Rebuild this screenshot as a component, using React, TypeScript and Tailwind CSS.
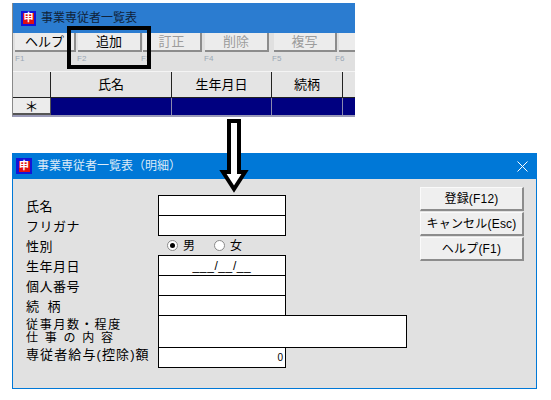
import type { ReactNode } from "react";

const jp = "font-['Liberation_Sans','Noto_Sans_CJK_JP',sans-serif]";

// ─── Shared bits ──────────────────────────────────────────────────────────────

function AppIcon({ small }: { small?: boolean }) {
  return (
    <span className={`flex items-center justify-center ${small ? "w-[15px] h-[15px]" : "w-[16px] h-[16px]"} bg-[#1414d8] shrink-0`}>
      <span className="flex items-center justify-center w-[11px] h-[11px] bg-[#e01010] text-white text-[10px] leading-none font-bold">
        申
      </span>
    </span>
  );
}

// ─── List window ──────────────────────────────────────────────────────────────

const toolButtons = [
  { label: "ヘルプ", width: "w-[61px]", ml: "ml-[2px]", disabled: false },
  { label: "追加", width: "w-[64px]", ml: "ml-[2px]", disabled: false },
  { label: "訂正", width: "w-[59px]", ml: "ml-[1px]", disabled: true },
  { label: "削除", width: "w-[64px]", ml: "ml-[3px]", disabled: true },
  { label: "複写", width: "w-[63px]", ml: "ml-[5px]", disabled: true },
  { label: "", width: "w-[20px]", ml: "ml-[2px]", disabled: true },
];

const keyLabels = [
  { label: "F1", width: "w-[62px]" },
  { label: "F2", width: "w-[64px]" },
  { label: "F3", width: "w-[63px]" },
  { label: "F4", width: "w-[68px]" },
  { label: "F5", width: "w-[63px]" },
  { label: "F6", width: "w-[20px]" },
];

const gridColumns = [
  { label: "", width: "w-[38px]" },
  { label: "氏名", width: "w-[121px]" },
  { label: "生年月日", width: "w-[100px]" },
  { label: "続柄", width: "w-[71px]" },
  { label: "", width: "w-[13px]" },
];

function ListWindow() {
  return (
    <div className="w-[343px] h-[114px] ml-[12px] border-l border-[#8a8a8a] border-b-2 border-b-[#9a9ab8] bg-[#e0e0e0] overflow-hidden">
      <div className="h-[30px] bg-[#2b7cd0] flex items-center gap-[5px] pl-[8px] text-[12px] text-[#10233a]">
        <AppIcon small />
        <span>事業専従者一覧表</span>
      </div>

      <div className="flex h-[19px]">
        {toolButtons.map((b, i) => (
          <div
            key={i}
            className={`${b.width} ${b.ml} shrink-0 bg-[#ececec] border-r-2 border-b-2 border-[#8c8c8c] flex items-center justify-center text-[13px] leading-none ${
              b.disabled ? "text-[#9c9c9c]" : "text-black"
            }`}
          >
            {b.label}
          </div>
        ))}
      </div>

      <div className="flex h-[19px] pl-[2px] text-[8px] leading-[14px] text-[#9aa7b5]">
        {keyLabels.map((k) => (
          <span key={k.label} className={`${k.width} shrink-0`}>
            {k.label}
          </span>
        ))}
      </div>

      <div className="flex h-[27px] border-t border-[#f4f4f4]">
        {gridColumns.map((c, i) => (
          <div
            key={i}
            className={`${c.width} shrink-0 bg-[#e4e4e4] border-r border-b border-[#222] flex items-center justify-center text-[13px] leading-none`}
          >
            {c.label}
          </div>
        ))}
      </div>

      <div className="flex h-[17px]">
        <div className="w-[38px] shrink-0 bg-[#ececec] border-r border-b-2 border-[#555] flex items-center justify-center text-[14px] leading-none">
          ＊
        </div>
        {gridColumns.slice(1).map((c, i) => (
          <div key={i} className={`${c.width} shrink-0 bg-[#000080] border-r border-[#8a8ab0]`} />
        ))}
      </div>
    </div>
  );
}

// ─── Detail dialog ────────────────────────────────────────────────────────────

function Field({ label, children }: { label: string; children?: ReactNode }) {
  return (
    <div className="flex h-[20px]">
      <span className="w-[132px] shrink-0 text-[13px] leading-[24px] tracking-[0.5px] [word-spacing:4px]">{label}</span>
      <div className="w-[128px] bg-white border border-black h-[21px] text-[12px] leading-none flex items-center justify-center">
        {children}
      </div>
    </div>
  );
}

function Radio({ checked }: { checked?: boolean }) {
  return (
    <span className="w-[11px] h-[11px] rounded-full bg-white border border-[#8a8a8a] flex items-center justify-center">
      {checked && <span className="w-[5px] h-[5px] rounded-full bg-black" />}
    </span>
  );
}

function DialogButton({ label }: { label: string }) {
  return (
    <div className="w-[104px] h-[24px] bg-[#efefef] border-t border-l border-[#fafafa] border-r-2 border-b-2 border-r-[#8c8c8c] border-b-[#8c8c8c] flex items-center justify-center text-[12px] leading-none tracking-[0.2px]">
      {label}
    </div>
  );
}

function DetailDialog() {
  return (
    <div className="w-[525px] h-[236px] ml-[12px] mt-[36px] border-x border-b border-[#0078d7] bg-[#e1e1e1] flex flex-col">
      <div className="h-[26px] -mx-[1px] bg-[#0078d7] flex items-center pl-[4px] pr-[9px] shrink-0">
        <AppIcon />
        <span className="ml-[5px] text-[12px] text-[#dcebf8]">事業専従者一覧表（明細）</span>
        <svg className="ml-auto" width="11" height="11" viewBox="0 0 11 11" fill="none" stroke="#ffffff" strokeWidth="1">
          <path d="M0.5 0.5L10.5 10.5M10.5 0.5L0.5 10.5" />
        </svg>
      </div>

      <div className="flex flex-1">
        <div className="pl-[13px] pt-[16px] w-[407px] shrink-0">
          <Field label="氏名" />
          <Field label="フリガナ" />
          <div className="flex h-[20px]">
            <span className="w-[132px] shrink-0 text-[13px] leading-[24px] tracking-[0.5px]">性別</span>
            <div className="flex items-center pl-[9px] text-[12px] leading-none pt-[1px]">
              <Radio checked />
              <span className="ml-[5px]">男</span>
              <span className="ml-[19px]">
                <Radio />
              </span>
              <span className="ml-[5px]">女</span>
            </div>
          </div>
          <Field label="生年月日">
            <span className="tracking-[0.6px]">___/__/__</span>
          </Field>
          <Field label="個人番号" />
          <Field label="続 柄" />
          <div className="flex h-[32px]">
            <span className="w-[132px] shrink-0 text-[12px] leading-[13px] pt-[4px] tracking-[1.7px] whitespace-nowrap">
              従事月数・程度
              <br />
              仕 事 の 内 容
            </span>
            <div className="w-[249px] h-[33px] bg-white border border-black" />
          </div>
          <div className="flex h-[20px]">
            <span className="w-[132px] shrink-0 text-[13px] leading-[16px] tracking-[1.1px] whitespace-nowrap">専従者給与(控除)額</span>
            <div className="w-[128px] h-[21px] bg-white border border-black text-[10px] leading-none flex items-center justify-end pr-[2px]">
              0
            </div>
          </div>
        </div>

        <div className="flex flex-col gap-[1px] pt-[8px]">
          <DialogButton label="登録(F12)" />
          <DialogButton label="キャンセル(Esc)" />
          <DialogButton label="ヘルプ(F1)" />
        </div>
      </div>
    </div>
  );
}

// ─── Page ─────────────────────────────────────────────────────────────────────

export default function App() {
  return (
    <div className={`relative w-[551px] h-[400px] bg-white pt-[3px] overflow-hidden text-black ${jp}`}>
      <ListWindow />
      <DetailDialog />

      {/* Highlight around the add button */}
      <div className="absolute left-[67px] top-[26px] w-[84px] h-[43px] border-[4px] border-black" />

      {/* Arrow between the windows */}
      <svg className="absolute left-[219px] top-[119px]" width="30" height="74" viewBox="0 0 30 74" fill="#ffffff" stroke="#000000" strokeWidth="4">
        <path d="M10 2H20V53H26L15 70L4 53H10Z" />
      </svg>
    </div>
  );
}
